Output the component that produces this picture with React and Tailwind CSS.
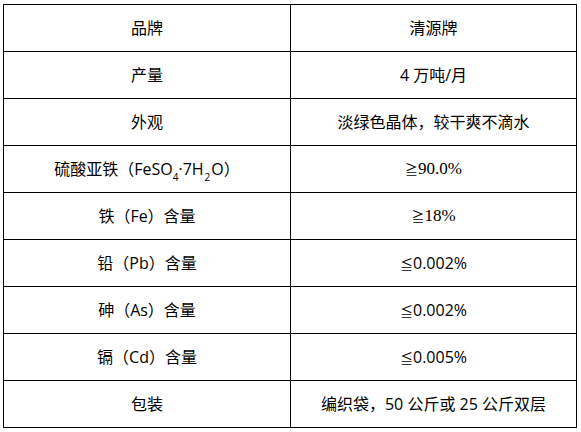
import React from "react";

const sans = "font-['Open_Sans','Noto_Sans_CJK_SC',sans-serif]";
const serif = "font-['Liberation_Serif','Noto_Sans_CJK_SC',serif]";

const Ge = ({ c }) => <span className="text-[13px]">{c}</span>;

const rows = [
  ["品牌", "清源牌"],
  ["产量", "4 万吨/月"],
  ["外观", "淡绿色晶体，较干爽不滴水"],
  [
    <span>硫酸亚铁（FeSO<sub className="text-[10px] align-[-3px]">4</sub>·7H<sub className="text-[10px] align-[-3px] px-[1px]">2</sub>O）</span>,
    <span className={serif + " text-[17px]"}><Ge c="≧" />90.0%</span>,
  ],
  ["铁（Fe）含量", <span className={serif + " text-[17px]"}><Ge c="≧" />18%</span>],
  ["铅（Pb）含量", <span><Ge c="≦" />0.002%</span>],
  ["砷（As）含量", <span><Ge c="≦" />0.002%</span>],
  ["镉（Cd）含量", <span><Ge c="≦" />0.005%</span>],
  ["包装", "编织袋，50 公斤或 25 公斤双层"],
];

export default function App() {
  return (
    <div className={"w-[581px] h-[432px] bg-white pt-[4px] pl-[3px] text-black text-[16px] " + sans}>
      <table className="border-collapse w-[574px] table-fixed">
        <tbody>
          {rows.map((r, i) => (
            <tr key={i} className="h-[47px]">
              <td className="w-[287px] border border-black text-center align-middle p-0">{r[0]}</td>
              <td className="border border-black text-center align-middle p-0">{r[1]}</td>
            </tr>
          ))}
        </tbody>
      </table>
    </div>
  );
}
